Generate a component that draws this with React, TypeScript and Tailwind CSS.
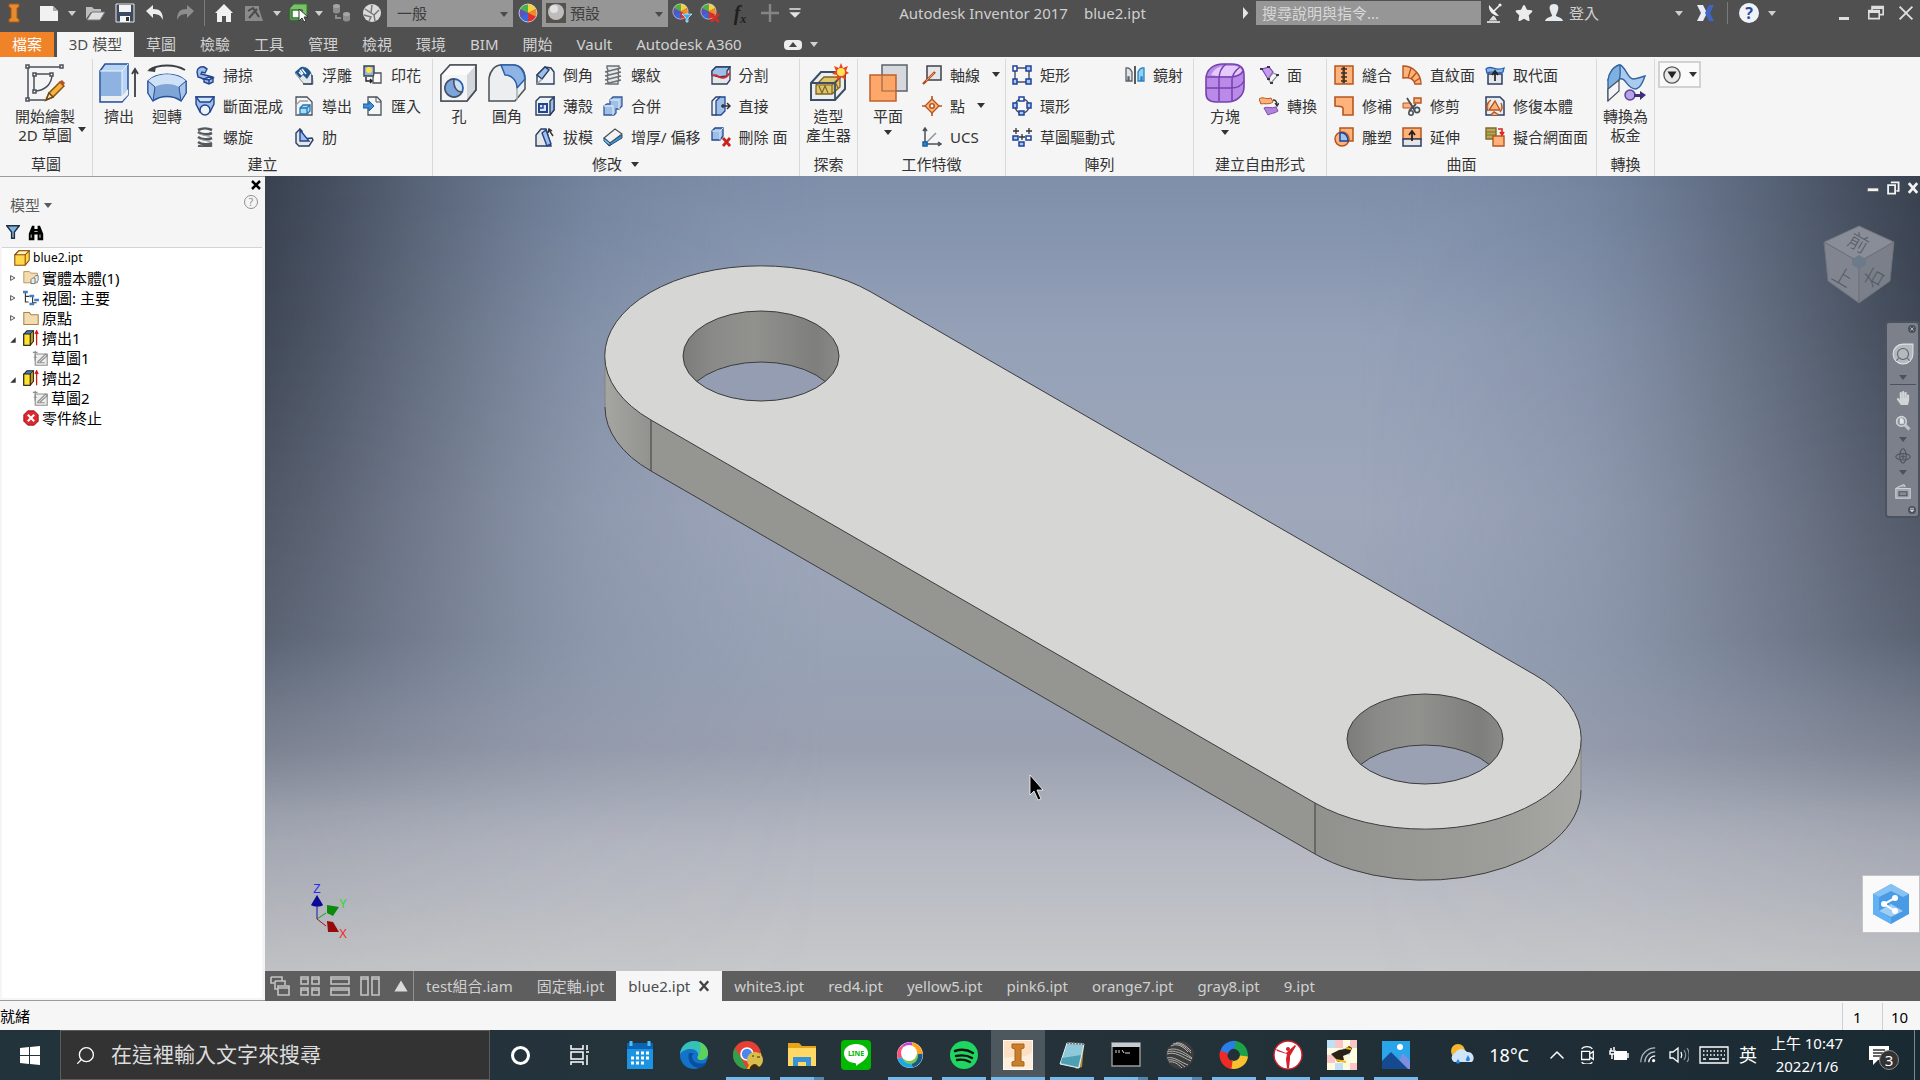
import type { ReactNode } from "react";
import { ChevronUp, Search } from "lucide-react";
import { FaHandPaper, FaStar } from "react-icons/fa";

const NAVY = "#2a3f63";
const BLUE = "#9dbfe8";
const PALE = "#d5e4f5";
const GREY = "#e4e6e8";
const ORANGE = "#ffb27a";
const RUST = "#b4561f";

const smallIcons: Record<string, ReactNode> = {
  sweep: (
    <g fill={PALE} stroke="#23458f" strokeWidth="1.4">
      <path d="M2 7c0-4 4-6 7-5l3 2-2 4-3-1-1 2 8 2 4 1v5l-4 2-5-2v-3l-6-2z" fill={BLUE} />
      <path d="M9 14l5-2 4 1-4 2z" />
      <path d="M14 15v4M9 2l3 2" />
    </g>
  ),
  loft: (
    <g stroke="#23458f" strokeWidth="1.4">
      <path d="M1 1h18v7l-4 8H5L1 8z" fill={BLUE} />
      <path d="M1 1h18l-4 5H5z" fill={PALE} />
      <circle cx="10" cy="14" r="5" fill="#eef3fa" />
    </g>
  ),
  coil: (
    <g fill="none" stroke="#55585c" strokeWidth="2.6">
      <path d="M3 3c4-2 10-2 14 0M3 5c4 3 10 3 14 1M3 10c4 3 10 3 14 1M3 15c4 3 10 3 14 1M3 19c4 1 10 1 14-1" />
      <path d="M4 7l12 3M4 12l12 3" stroke="#a4a7aa" strokeWidth="1" />
    </g>
  ),
  emboss: (
    <g>
      <path d="M1 8L8 2c6 0 11 5 11 17h-9z" fill={GREY} stroke="#8b9096" />
      <path d="M1 7l6-5c5 0 8 2 10 6l-4 6-4-4-3 3z" fill="#1f5690" />
      <path d="M6 5l3 4M8 4l4 5M5 7l3 3" stroke="#fff" strokeWidth="1.4" />
      <path d="M18 10v9H9" fill="none" stroke={NAVY} strokeWidth="1.4" />
    </g>
  ),
  derive: (
    <g stroke="#4b5058" strokeWidth="1.3">
      <path d="M2 1h11l5 5v13H2z" fill="#f4f5f6" />
      <path d="M2 19V9l4-4h8" fill="none" stroke="#9aa0a6" />
      <path d="M6 12l3-3h7v6l-3 3H6z" fill="#a9dbf7" stroke="#2477b5" />
      <path d="M6 12h7v6M13 12l3-3" fill="none" stroke="#2477b5" />
    </g>
  ),
  rib: (
    <g stroke={NAVY} strokeWidth="1.4">
      <path d="M2 6l4-4 2 2v8l10-1 1 2-4 6H5l-3-3z" fill={GREY} />
      <path d="M6 3v11h9z" fill={BLUE} stroke="#23458f" />
    </g>
  ),
  decal: (
    <g>
      <path d="M1 1h10v10H1z" fill="#8fb4e6" stroke="#3c4046" strokeWidth="1.4" />
      <circle cx="6" cy="5" r="3" fill="#ffe14b" />
      <path d="M11 8h7v10h-8v-5z" fill="#fafafa" stroke="#4b5058" strokeWidth="1.3" />
      <path d="M3 12v4h6M7 14l2 2-2 2" fill="none" stroke="#222" strokeWidth="1.4" />
    </g>
  ),
  importIn: (
    <g>
      <path d="M5 1h9l4 4v14H5z" fill="#f4f5f6" stroke="#4b5058" strokeWidth="1.3" />
      <path d="M13 1v5h5" fill="none" stroke="#4b5058" />
      <path d="M0 8h6V5l5 5-5 5v-3H0z" fill="#3f8fd8" stroke="#1d5c9e" />
    </g>
  ),
  chamfer: (
    <g stroke={NAVY} strokeWidth="1.4">
      <path d="M2 10l8-8 6 1 3 4v12H2z" fill="#f0f1f2" />
      <path d="M2 10l8-8 4 3-7 9z" fill={BLUE} />
      <path d="M7 14l-5 5" stroke="#9aa0a6" />
    </g>
  ),
  shell: (
    <g stroke={NAVY} strokeWidth="1.4">
      <path d="M1 5l4-4h14v13l-4 5H1z" fill="#f0f1f2" />
      <path d="M15 5l4-4v13l-4 5z" fill={BLUE} />
      <path d="M4 8h8v8H4z" fill={PALE} stroke="#23458f" strokeWidth="2" />
      <path d="M8 8v4H4" fill="none" stroke="#23458f" />
    </g>
  ),
  draft: (
    <g stroke={NAVY} strokeWidth="1.4">
      <path d="M1 19V8l5-6h5l5 17z" fill={GREY} />
      <path d="M7 6l4-3 5 14-4 2z" fill={BLUE} stroke="#23458f" />
      <path d="M18 9l-4-6M13 6l1-4 3 2" fill="none" stroke="#333" />
    </g>
  ),
  thread: (
    <g stroke="#6a6e73" strokeWidth="1.4" fill="#e6e7e8">
      <path d="M4 1h12v2l-1 2 1 2-1 2 1 2-1 2 1 2-1 2v2H5v-2l-1-2 1-2-1-2 1-2-1-2 1-2-1-2z" />
      <path d="M2 7l16-4M2 11l16-4M2 15l16-4M2 19l16-4" />
    </g>
  ),
  combine: (
    <g stroke="#345a94" strokeWidth="1.3">
      <path d="M7 4l3-3h9v9l-3 3h-3v4l-2 2H1v-9l3-2h3z" fill={BLUE} />
      <path d="M7 4h9v9M1 10h9v9" fill="none" stroke={PALE} />
    </g>
  ),
  thicken: (
    <g>
      <path d="M1 13l5 6 13-8v-3L6 16z" fill="#3b9ad8" stroke="#1f4f7e" />
      <path d="M1 11L12 2l7 5L7 16z" fill="#f2f3f4" stroke="#4b5058" strokeWidth="1.2" />
      <path d="M1 11v3l6 5v-3z" fill="#7cc4ee" stroke="#1f4f7e" />
    </g>
  ),
  split: (
    <g stroke={NAVY} strokeWidth="1.3">
      <path d="M1 6l4-4h14v13l-3 4H1z" fill={GREY} />
      <path d="M1 6l4-4h14l-3 4v5l-8 1-7-2z" fill={BLUE} />
      <path d="M1 11c5-4 8 5 14 1l4-4" fill="none" stroke="#d8262c" strokeWidth="1.8" />
    </g>
  ),
  direct: (
    <g stroke={NAVY} strokeWidth="1.3">
      <path d="M1 5l4-4h4v14l-4 4H1z" fill="#f0f1f2" />
      <path d="M5 5l4-4h5v14l-4 4H5z" fill={BLUE} stroke="#23458f" />
      <path d="M12 8v4M10 10h8M16 7l3 3-3 3" fill="none" stroke="#333" strokeWidth="1.5" />
    </g>
  ),
  deleteFace: (
    <g>
      <path d="M1 4l3-3h8v8l-3 4H1z" fill={BLUE} stroke="#23458f" strokeWidth="1.3" />
      <path d="M1 4h8v9M9 4l3-3" fill="none" stroke={PALE} />
      <path d="M12 11l7 8M19 11l-7 8" stroke="#c8231e" strokeWidth="2.8" />
    </g>
  ),
  axis: (
    <g>
      <path d="M5 1h14v14H5z" fill={GREY} stroke="#3c424a" strokeWidth="1.5" />
      <path d="M1 19L13 7" stroke="#b0471e" strokeWidth="2.4" />
      <path d="M4 16l8-8" stroke="#ff9a5a" strokeWidth="1" />
    </g>
  ),
  point: (
    <g>
      <path d="M10 0v20M0 10h20" stroke={RUST} strokeWidth="1.6" />
      <path d="M10 3l7 7-7 7-7-7z" fill={ORANGE} stroke={RUST} strokeWidth="1.3" />
      <circle cx="10" cy="10" r="2.2" fill="#fff" stroke={RUST} strokeWidth="1.6" />
    </g>
  ),
  ucs: (
    <g stroke="#4b5058" strokeWidth="1.5" fill="none">
      <path d="M3 17V2M1 4l2-3 2 3M4 17h14M16 15l3 2-3 2" />
      <path d="M4 16L14 6" stroke="#8a9097" />
      <path d="M1 15h4v4H1z" fill="#2b8de0" stroke="#1b5ca0" />
    </g>
  ),
  rectArray: (
    <g>
      <path d="M3 3h14v14H3z" fill="none" stroke="#4b5058" strokeWidth="1.4" />
      <g fill="#a9c7ef" stroke="#1e419c" strokeWidth="1.5">
        <path d="M1 1h4v5H1z" fill="#fff" />
        <path d="M14 1h5v5h-5zM1 14h4v5H1zM14 14h5v5h-5z" />
      </g>
    </g>
  ),
  circArray: (
    <g>
      <circle cx="10" cy="10" r="7" fill="none" stroke="#4b5058" strokeWidth="1.4" />
      <g fill="#a9c7ef" stroke="#1e419c" strokeWidth="1.5">
        <path d="M7 1h5v4H7z" fill="#fff" />
        <path d="M1 7h4v5H1zM15 7h4v5h-4zM7 15h5v4H7z" />
      </g>
    </g>
  ),
  sketchArray: (
    <g>
      <path d="M4 1v6M1 4h6M17 1v6M14 4h6M10 7v6M7 10h6" stroke="#333" strokeWidth="1.3" />
      <g fill="#a9c7ef" stroke="#1e419c" strokeWidth="1.5">
        <path d="M1 9h5v4H1zM7 15h5v4H7z" />
        <path d="M14 9h5v4h-5z" fill="#fff" />
      </g>
    </g>
  ),
  mirror: (
    <g>
      <path d="M10 1v18" stroke="#333" strokeWidth="1.6" />
      <path d="M1 3c4-1 5 2 6 4v9H4v-4H3v4H1z" fill="#dfe3e7" stroke="#5b626b" strokeWidth="1.3" />
      <path d="M19 3c-4-1-5 2-6 4v9h3v-4h1v4h2z" fill="#8fd0f5" stroke="#2a82bf" strokeWidth="1.3" />
    </g>
  ),
  freeFace: (
    <g>
      <path d="M3 4l7-2 4 5-5 7z" fill="#c79cf0" stroke="#7a4bb0" strokeWidth="1.2" />
      <path d="M9 14l5-6 5 2-7 8z" fill="none" stroke="#8a9097" strokeWidth="1.2" />
      <path d="M1 3h3v2H1zM17 9h3v2h-3zM11 17h3v2h-3zM8 1h3v2H8zM8 13h3v2H8z" fill="#3c3448" />
    </g>
  ),
  freeConvert: (
    <g>
      <path d="M0 3c4-3 6 1 12-1l2 4c-4 3-9 1-12 2z" fill={ORANGE} stroke={RUST} />
      <path d="M5 12c4-2 7 1 12-1l2 4c-4 3-7 2-10 4z" fill="#b183dc" stroke="#7a4bb0" />
      <path d="M14 4c3 0 4 2 4 5M16 7l2 3 2-3" fill="none" stroke="#333" strokeWidth="1.3" />
    </g>
  ),
  stitch: (
    <g>
      <path d="M1 1h8v18H1zM10 1h9v18h-9z" fill={ORANGE} stroke={RUST} strokeWidth="1.5" />
      <path d="M7 4h6M7 8h6M7 12h6M7 16h6M10 2v16" stroke="#333" strokeWidth="1.5" />
    </g>
  ),
  patch: <path d="M1 1h18v18H9v-7c-1-2-4-2-8-2z" fill={ORANGE} stroke={RUST} strokeWidth="1.6" />,
  sculpt: (
    <g>
      <path d="M6 1h13v13H6z" fill={ORANGE} stroke={RUST} strokeWidth="1.5" />
      <circle cx="8" cy="12" r="7" fill={ORANGE} stroke={RUST} strokeWidth="1.5" />
      <path d="M6 6c5-1 8 3 8 8H6z" fill="#9fc4ee" stroke="#1e419c" strokeWidth="1.5" />
    </g>
  ),
  ruled: (
    <g fill={ORANGE} stroke={RUST} strokeWidth="1.4">
      <path d="M1 1c10 0 18 8 18 18h-6C12 14 7 12 1 13z" />
      <path d="M6 13L9 3M9 14l6-7M12 17l6-4" />
    </g>
  ),
  trim: (
    <g>
      <path d="M1 7h8l2 5H1z" fill={ORANGE} stroke={RUST} />
      <path d="M12 2h7v5h-7z" fill={ORANGE} stroke={RUST} strokeWidth="1.4" />
      <path d="M5 2l8 13M14 8L7 15" stroke="#4b5058" strokeWidth="1.8" />
      <g fill="none" stroke="#4b5058" strokeWidth="1.6">
        <circle cx="15" cy="14" r="2.6" />
        <circle cx="9" cy="17" r="2.2" />
      </g>
    </g>
  ),
  extend: (
    <g>
      <path d="M1 1h18v11H1z" fill={ORANGE} stroke={RUST} strokeWidth="1.5" />
      <path d="M1 12h18v7H1z" fill={GREY} stroke={NAVY} strokeWidth="1.5" />
      <path d="M10 14V5M7 8l3-4 3 4" fill="none" stroke="#222" strokeWidth="1.8" />
    </g>
  ),
  replaceFace: (
    <g>
      <path d="M3 9h14v10H3z" fill={GREY} stroke={NAVY} strokeWidth="1.5" />
      <path d="M1 4c5-5 9 3 18-1l-1 4c-6 3-10-2-16 1z" fill="#8db8ec" stroke="#2762b5" strokeWidth="1.3" />
      <path d="M10 16V8M7 10l3-4 3 4" fill="none" stroke="#222" strokeWidth="1.7" />
    </g>
  ),
  repair: (
    <g>
      <path d="M1 1h14l4 4v14H1z" fill="#e8edf3" stroke={NAVY} strokeWidth="1.5" />
      <path d="M4 14L10 5l5 9z" fill={ORANGE} stroke={RUST} strokeWidth="1.4" />
      <path d="M3 15a8 8 0 0 1 3-11M16 7a8 8 0 0 1-1 9M6 19l3-3 5 3" fill={ORANGE} stroke={RUST} strokeWidth="1.4" />
    </g>
  ),
  fitMesh: (
    <g>
      <path d="M1 1h10v11H1z" fill="#b9a85a" stroke="#7b6d28" strokeWidth="1.4" />
      <path d="M1 5h10M1 8h10" stroke="#7b6d28" />
      <path d="M8 9h11v10H8z" fill={ORANGE} stroke={RUST} strokeWidth="1.4" />
      <path d="M13 2h4v4M15 5l2 3 2-3" fill="none" stroke="#e02020" strokeWidth="1.6" />
    </g>
  ),
};

const largeIcons: Record<string, ReactNode> = {
  sketch: (
    <g fill="none" stroke="#4b5058" strokeWidth="1.5">
      <path d="M3 4h34M3 4v33M3 37h17M9 11h19M9 11v17M9 28c10 0 18-6 18-17" />
      <g fill="#fff">
        <path d="M1 2h3v3H1zM35 2h3v3h-3zM1 35h3v3H1zM8 10h3v3H8zM25 10h3v3h-3zM8 27h3v3H8z" />
      </g>
      <path d="M21 37l3-7 11-11 4 4-11 11z" fill="#f6b43c" stroke="#8a5410" />
      <path d="M34 19l4 4 2-3-3-3z" fill="#b4532a" stroke="none" />
      <path d="M21 37l3-7 4 4z" fill="#f4e3c6" stroke="#6d4413" />
    </g>
  ),
  extrude: (
    <g>
      <path d="M1 8l5-7h23v31l-6 7H1z" fill="#b9d3f2" stroke="#24509c" strokeWidth="1.5" />
      <path d="M2 8h21v25H2z" fill="#8fb3e0" />
      <path d="M2 33h21v5H2zM23 33l6-7v6l-6 6z" fill="#eceef0" />
      <path d="M1 8h22v30M23 8l6-7" fill="none" stroke="#eef5fd" />
      <path d="M36 34V8M33 11l3-5 3 5" fill="none" stroke="#3b3f45" strokeWidth="1.8" />
    </g>
  ),
  revolve: (
    <g>
      <path d="M2 7c10-6 26-6 36 0" fill="none" stroke="#3b3f45" strokeWidth="2" />
      <path d="M0 8l9-5-1 6z" fill="#3b3f45" />
      <path d="M1 18c9-9 29-9 38 0v12l-5 8c-8-6-20-6-28 0l-5-8z" fill="#7fa5d6" stroke="#24509c" strokeWidth="1.5" />
      <path d="M1 18c9-9 29-9 38 0l-7 6c-6-4-18-4-24 0z" fill="#cfe1f6" />
      <path d="M1 18l7 6-2 14-5-8zM39 18l-7 6 2 14 5-8z" fill="#a9c6ea" stroke="#24509c" />
    </g>
  ),
  hole: (
    <g stroke="#4b5058" strokeWidth="1.5">
      <path d="M2 12l9-10h26v25L28 38H2z" fill="#d3d7db" />
      <path d="M2 12h26v26H2z" fill="#f3f4f5" stroke="none" />
      <path d="M2 12l9-10h26l-9 10z" fill="#fbfbfb" stroke="none" />
      <path d="M2 12l9-10h26v25L28 38H2z" fill="none" />
      <circle cx="15" cy="25" r="9" fill="#cfe0f5" stroke="#2b5fae" strokeWidth="1.8" />
      <path d="M15 16a9 9 0 1 0 8 13c-6 0-9-6-8-13z" fill="#7ba6dd" />
    </g>
  ),
  fillet: (
    <g stroke="#4b5058" strokeWidth="1.5">
      <path d="M2 15C3 8 8 2 14 2h12c8 0 12 6 12 14v10L28 38H2z" fill="#eceef0" />
      <path d="M14 2h12c8 0 12 8 12 14l-8 9c0-8-6-13-12-13z" fill="#8db4e4" stroke="#2b5fae" />
      <path d="M30 25v12" stroke="#aab0b6" />
    </g>
  ),
  generator: (
    <g>
      <path d="M2 20l10-11h24v17L26 37H2z" fill="#eceef0" stroke="#3c4f66" strokeWidth="2" />
      <path d="M7 22l8-8h16v10l-8 7H7z" fill="#e2c56a" stroke="#7b6424" strokeWidth="1.3" />
      <path d="M7 22h16v9M23 22l8-8M10 23l3 7 3-7 3 7M26 19l3 6" fill="none" stroke="#7b6424" strokeWidth="1.2" />
      <path d="M2 20h24v17M26 20l10-11" fill="none" stroke="#3c4f66" strokeWidth="1.8" />
      <path d="M32 0l2 5 5-2-2 5 3 2-4 2 1 5-5-3-4 4 0-6-5-1 4-3-2-5 5 2z" fill="#f0441c" />
      <circle cx="32" cy="9" r="4" fill="#ffe45a" />
    </g>
  ),
  plane: (
    <g>
      <path d="M14 2h25v26H14z" fill="#d5d9de" stroke="#5b626b" strokeWidth="1.5" />
      <path d="M2 12h26v26H2z" fill="#ff9e5c" fillOpacity="0.9" stroke="#c0602a" strokeWidth="1.5" />
      <path d="M14 12v16h14" fill="none" stroke="#a86a45" strokeWidth="1.2" />
    </g>
  ),
  freeBox: (
    <g>
      <path d="M1 16C1 6 9 1 18 1h9c8 0 12 4 12 11v12c0 9-8 15-17 15H11C4 39 1 36 1 30z" fill="#b98ae8" stroke="#7541ae" strokeWidth="1.6" />
      <path d="M6 12c3-6 8-9 14-9h8c5 0 8 2 9 5-3 4-8 5-14 5H12z" fill="#e4cbfb" />
      <path d="M1 25h25c6 0 11-3 13-7M14 38V16c0-6 3-12 7-15M27 38V17c0-5 4-10 8-13M2 14h24c6 0 11-3 12-6" fill="none" stroke="#7541ae" strokeWidth="1.5" />
    </g>
  ),
  sheetMetal: (
    <g>
      <path d="M2 17C3 9 8 3 14 2c6 2 7 13 13 14 4 0 8-2 12-3-2 6-5 12-9 13-10 0-9-12-17-10z" fill="#a9cbee" stroke="#33669f" strokeWidth="1.4" />
      <path d="M2 17C3 9 8 3 14 2c0 5 1 10-1 15L2 38z" fill="#7fb0e2" stroke="#33669f" strokeWidth="1.4" />
      <path d="M2 26l11-9v11L2 38z" fill="#f3f5f7" stroke="#4b5058" strokeWidth="1.2" />
      <circle cx="24" cy="32" r="5" fill="#b7a2e6" stroke="#5c449c" strokeWidth="1.5" />
      <path d="M28 31h6v-3l6 4-6 5v-3h-6z" fill="#3f2e78" />
    </g>
  ),
};

function Caret({ className = "" }: { className?: string }) {
  return (
    <svg viewBox="0 0 8 5" className={`h-[5px] w-2 shrink-0 ${className}`} fill="currentColor" aria-hidden="true">
      <path d="M0 0h8L4 5z" />
    </svg>
  );
}

function Big({ icon, lines, caret, side }: { icon: string; lines: string[]; caret?: boolean; side?: boolean }) {
  return (
    <button className={`relative flex shrink-0 flex-col items-center pt-1 ${side ? "w-[90px]" : "w-12"}`}>
      <svg viewBox="0 0 40 40" className="h-10 w-10 shrink-0" aria-hidden="true">
        {largeIcons[icon]}
      </svg>
      <span className="mt-1 whitespace-nowrap leading-[19px]">
        {lines.map((line) => (
          <span key={line} className="block">{line}</span>
        ))}
      </span>
      {caret && <Caret className="mt-1" />}
      {side && <Caret className="absolute right-1 bottom-5 w-1.5" />}
    </button>
  );
}

type Tool = { icon: string; label: string; caret?: boolean };

function ToolColumn({ tools }: { tools: Tool[] }) {
  return (
    <div className="flex shrink-0 flex-col">
      {tools.map((tool) => (
        <button key={tool.label} className="flex h-[31px] items-center gap-2 whitespace-nowrap">
          <svg viewBox="0 0 20 20" className="h-5 w-5 shrink-0" aria-hidden="true">
            {smallIcons[tool.icon]}
          </svg>
          <span>{tool.label}</span>
          {tool.caret && <Caret className="ml-1 w-1.5" />}
        </button>
      ))}
    </div>
  );
}

function Panel({ title, className, caret, children }: { title: string; className: string; caret?: boolean; children: ReactNode }) {
  return (
    <section className={`flex shrink-0 flex-col border-r border-[#d9d9d9] ${className}`} aria-label={title}>
      <div className="flex flex-1">{children}</div>
      <h2 className="flex h-6 items-center justify-center gap-2">
        {title}
        {caret && <Caret className="w-2.5" />}
      </h2>
    </section>
  );
}

function ToolButton({ label, className = "w-[30px]", children }: { label: string; className?: string; children: ReactNode }) {
  return (
    <button aria-label={label} className={`flex shrink-0 items-center justify-center ${className}`}>
      {children}
    </button>
  );
}

function Glyph({ children, className = "h-5 w-5" }: { children: ReactNode; className?: string }) {
  return (
    <svg viewBox="0 0 20 20" className={`shrink-0 ${className}`} aria-hidden="true">
      {children}
    </svg>
  );
}

function ColorWheel() {
  return (
    <g>
      <path d="M10 10V1a9 9 0 0 1 8 5z" fill="#f6d33c" />
      <path d="M10 10l8-4a9 9 0 0 1 0 8z" fill="#f08a2c" />
      <path d="M10 10l8 4a9 9 0 0 1-8 5z" fill="#df2f2f" />
      <path d="M10 10v9a9 9 0 0 1-8-5z" fill="#3d66dd" />
      <path d="M10 10l-8 4a9 9 0 0 1 0-8z" fill="#5f4fc4" />
      <path d="M10 10L2 6a9 9 0 0 1 8-5z" fill="#4fae4a" />
      <circle cx="10" cy="10" r="9" fill="none" stroke="#d9d9d9" strokeWidth="0.8" />
    </g>
  );
}

function TitleBar() {
  return (
    <header className="flex h-8 items-center bg-[#505050] pb-1.5 text-[#cfcfcf]">
      <ToolButton label="Inventor" className="mr-1.5 w-7">
        <Glyph className="h-6 w-5">
          <path d="M5 1h10v3l-2 1v10l2 1v3H5v-3l2-1V5L5 4z" fill="#e88b2e" stroke="#a85a14" />
        </Glyph>
      </ToolButton>
      <ToolButton label="新建">
        <Glyph><path d="M1 3h13l5 5v10H1z" fill="#f1f1f1" /><path d="M14 3v5h5z" fill="#a8a8a8" /></Glyph>
      </ToolButton>
      <ToolButton label="新建選項" className="w-4"><Caret className="w-1.5" /></ToolButton>
      <ToolButton label="開啟">
        <Glyph><path d="M1 16V4h6l2 2h7v3H6z" fill="#bdbdbd" /><path d="M2 17L7 9h13l-5 8z" fill="#dcdfe4" stroke="#777" /></Glyph>
      </ToolButton>
      <ToolButton label="儲存">
        <Glyph><path d="M1 1h18v18H1z" fill="#3e4a60" stroke="#e6e6e6" /><path d="M4 2h12v7H4z" fill="#f5f5f5" /><path d="M5 13h10v6H5z" fill="#f5f5f5" /><path d="M11 14h3v4h-3z" fill="#333" /></Glyph>
      </ToolButton>
      <ToolButton label="復原">
        <Glyph><path d="M1 8l7-6v4c7 0 10 3 10 11-2-4-4-6-10-6v4z" fill="#ececec" /></Glyph>
      </ToolButton>
      <ToolButton label="重做">
        <Glyph><path d="M19 8l-7-6v4C5 6 2 9 2 17c2-4 4-6 10-6v4z" fill="#8d8d8d" /></Glyph>
      </ToolButton>
      <span className="mx-1 h-[26px] w-px bg-[#7a7a7a]" />
      <ToolButton label="首頁">
        <Glyph><path d="M10 1L1 10h2v9h5v-6h4v6h5v-9h2z" fill="#f1f1f1" /></Glyph>
      </ToolButton>
      <ToolButton label="草圖工具">
        <Glyph><path d="M1 3h14v3l4 12H1z" fill="#8a8a8a" /><path d="M4 8l5-3 6 9M5 15l8-9" stroke="#4a4a4a" strokeWidth="2" fill="none" /></Glyph>
      </ToolButton>
      <ToolButton label="草圖選項" className="w-4"><Caret className="w-1.5" /></ToolButton>
      <ToolButton label="選取" className="w-7">
        <Glyph><path d="M1 5l4-4h13v11l-4 5H1z" fill="#7cc06a" stroke="#2f7a2a" /><path d="M3 7h10v8H3z" fill="#fff" stroke="#2f7a2a" strokeWidth="1.5" /><path d="M10 6v12l3-3 2 4 2-1-2-4h4z" fill="#fff" stroke="#333" /></Glyph>
      </ToolButton>
      <ToolButton label="選取選項" className="w-3"><Caret className="w-1.5" /></ToolButton>
      <ToolButton label="更新" className="w-8">
        <Glyph>
          <path d="M2 3v6c2 2 5 2 7 0V3zM12 11v6c2 2 5 2 7 0v-6z" fill="#8d8d8d" />
          <ellipse cx="5.5" cy="3" rx="3.5" ry="2" fill="#a5a5a5" /><ellipse cx="15.5" cy="11" rx="3.5" ry="2" fill="#a5a5a5" />
          <path d="M5 12v3h5" stroke="#8d8d8d" strokeWidth="2" fill="none" />
        </Glyph>
      </ToolButton>
      <ToolButton label="材料">
        <Glyph><circle cx="10" cy="10" r="9" fill="#dcdcdc" /><path d="M3 6l6 4 1-8M17 7l-5 5 1 6M2 12l7 2-2 4M9 10l3 2" fill="none" stroke="#777" strokeWidth="1.5" /></Glyph>
      </ToolButton>
      <div className="relative flex h-[27px] shrink-0 items-start">
        <select aria-label="材料樣式" className="h-[27px] w-[126px] appearance-none bg-[#969696] pl-2.5 text-[#3d3d3d]">
          <option>一般</option>
        </select>
        <Caret className="absolute top-3 right-1 w-2.5 text-[#4a4a4a]" />
      </div>
      <ToolButton label="外觀" className="w-[29px]"><Glyph><ColorWheel /></Glyph></ToolButton>
      <div className="relative flex h-[27px] shrink-0 items-start">
        <select aria-label="外觀樣式" className="h-[27px] w-[126px] appearance-none bg-[#969696] pl-7 text-[#3d3d3d]">
          <option>預設</option>
        </select>
        <Glyph className="absolute top-[3px] left-1 h-5 w-5">
          <path d="M0 0h20v20H0z" fill="#55524d" />
          <circle cx="10" cy="9" r="8" fill="#bdbdbd" /><circle cx="8" cy="6" r="4" fill="#e2e2e2" />
        </Glyph>
        <Caret className="absolute top-3 right-1 w-2.5 text-[#4a4a4a]" />
      </div>
      <ToolButton label="調整外觀" className="w-[27px]">
        <Glyph><g transform="scale(0.85)"><ColorWheel /></g><path d="M10 11h10l-4 4v4h-2v-4z" fill="#3bb0ea" stroke="#fff" strokeWidth="0.6" /></Glyph>
      </ToolButton>
      <ToolButton label="清除外觀">
        <Glyph><g transform="scale(0.85)"><ColorWheel /></g><path d="M11 11l8 8M19 11l-8 8" stroke="#d02f24" strokeWidth="2.6" /></Glyph>
      </ToolButton>
      <ToolButton label="參數"><span className="font-['Liberation_Serif',serif] text-xl leading-5 font-bold text-[#1f1f1f] italic">f<sub className="text-xs">x</sub></span></ToolButton>
      <ToolButton label="加入"><Glyph><path d="M10 1v18M1 10h18" stroke="#868686" strokeWidth="2.4" /></Glyph></ToolButton>
      <ToolButton label="自訂" className="w-5">
        <Glyph className="h-4 w-4"><path d="M3 4h14v2H3zM3 9h14l-7 7z" fill="#e4e4e4" /></Glyph>
      </ToolButton>

      <h1 className="flex min-w-0 flex-1 justify-center gap-4 whitespace-nowrap">
        <span>Autodesk Inventor 2017</span>
        <span>blue2.ipt</span>
      </h1>

      <Glyph className="mr-1 h-3 w-3"><path d="M5 0l9 10-9 10z" fill="#e4e4e4" /></Glyph>
      <input aria-label="搜尋說明" placeholder="搜尋說明與指令..." className="h-6 w-[225px] shrink-0 bg-[#969696] px-1.5 placeholder:text-[#d8d8d8]" />
      <ToolButton label="通訊中心" className="w-7">
        <Glyph>
          <path d="M4 2c-1 6 4 11 10 11z" fill="#f1f1f1" />
          <path d="M9 8l5-5" stroke="#f1f1f1" strokeWidth="1.6" />
          <circle cx="15" cy="2" r="1.6" fill="#f1f1f1" />
          <path d="M8 12l2 1 3 5H3z" fill="#dcdcdc" stroke="#2c2c2c" strokeWidth="0.8" />
          <path d="M2 19h13" stroke="#f1f1f1" strokeWidth="1.6" />
        </Glyph>
      </ToolButton>
      <ToolButton label="我的最愛"><FaStar className="h-[18px] w-[18px] text-[#ececec]" /></ToolButton>
      <ToolButton label="帳戶">
        <Glyph><path d="M10 1c-4 0-5 3-4 6 1 4 2 4 2 6-1 1-6 1-7 5h18c-1-4-6-4-7-5 0-2 1-2 2-6 1-3 0-6-4-6z" fill="#e6ebf0" /></Glyph>
      </ToolButton>
      <button className="flex w-[122px] shrink-0 items-center justify-between pr-2">登入<Caret className="w-1.5" /></button>
      <ToolButton label="Exchange">
        <Glyph><path d="M1 2h6l4 8-4 8H1l4-8z" fill="#e8edf5" /><path d="M18 2h-5l-4 8 4 8h5l-4-8z" fill="#3f66c4" /></Glyph>
      </ToolButton>
      <span className="mx-1.5 h-[22px] w-px bg-[#7a7a7a]" />
      <ToolButton label="說明">
        <span className="flex h-5 w-5 items-center justify-center rounded-full bg-[#f0f3f8] text-base leading-none font-bold text-[#2c4da0]">?</span>
      </ToolButton>
      <ToolButton label="說明選項" className="mr-12 w-4"><Caret className="w-1.5" /></ToolButton>
      <ToolButton label="最小化" className="w-8"><span className="mt-2.5 h-[3px] w-2.5 bg-[#dedede]" /></ToolButton>
      <ToolButton label="還原" className="w-8">
        <Glyph className="h-4 w-4"><path d="M5 6V2h14v10h-5M1 7h13v10H1zM1 9h13M5 4h14" fill="none" stroke="#dedede" strokeWidth="2" /></Glyph>
      </ToolButton>
      <ToolButton label="關閉" className="w-7">
        <Glyph className="h-4 w-4"><path d="M2 2l16 16M18 2L2 18" stroke="#dedede" strokeWidth="2.4" /></Glyph>
      </ToolButton>
    </header>
  );
}

const ribbonTabs = ["草圖", "檢驗", "工具", "管理", "檢視", "環境", "BIM", "開始", "Vault", "Autodesk A360"];

function RibbonTabs() {
  return (
    <nav className="flex h-[25px] items-stretch bg-[#505050] text-[#d2d2d2]">
      <button className="w-[54px] bg-[#f08228] pb-0.5 text-white">檔案</button>
      <button className="ml-[3px] w-[77px] bg-[#f5f5f5] pb-0.5 text-[#4c4c4c]">3D 模型</button>
      {ribbonTabs.map((tab) => (
        <button key={tab} className="px-3 pb-0.5 whitespace-nowrap">{tab}</button>
      ))}
      <button aria-label="最小化功能區" className="ml-[30px] flex items-center gap-2">
        <span className="flex h-2.5 w-[18px] items-center justify-center rounded-sm bg-[#ececec] text-[#444]"><Caret className="rotate-180" /></span>
        <Caret className="w-1.5" />
      </button>
    </nav>
  );
}

function Ribbon() {
  return (
    <div className="flex h-[119px] overflow-hidden bg-[#f5f5f5] pt-0.5 text-[#333]">
      <Panel title="草圖" className="w-[93px]">
        <Big icon="sketch" lines={["開始繪製", "2D 草圖"]} side />
      </Panel>
      <Panel title="建立" className="w-[340px]">
        <div className="flex pl-0.5">
          <Big icon="extrude" lines={["擠出"]} />
          <Big icon="revolve" lines={["迴轉"]} />
        </div>
        <div className="flex gap-[11px] pl-1">
          <ToolColumn tools={[{ icon: "sweep", label: "掃掠" }, { icon: "loft", label: "斷面混成" }, { icon: "coil", label: "螺旋" }]} />
          <ToolColumn tools={[{ icon: "emboss", label: "浮雕" }, { icon: "derive", label: "導出" }, { icon: "rib", label: "肋" }]} />
          <ToolColumn tools={[{ icon: "decal", label: "印花" }, { icon: "importIn", label: "匯入" }]} />
        </div>
      </Panel>
      <Panel title="修改" className="w-[367px]" caret>
        <div className="flex pl-0.5">
          <Big icon="hole" lines={["孔"]} />
          <Big icon="fillet" lines={["圓角"]} />
        </div>
        <div className="flex gap-2.5 pl-1">
          <ToolColumn tools={[{ icon: "chamfer", label: "倒角" }, { icon: "shell", label: "薄殼" }, { icon: "draft", label: "拔模" }]} />
          <ToolColumn tools={[{ icon: "thread", label: "螺紋" }, { icon: "combine", label: "合併" }, { icon: "thicken", label: "增厚/ 偏移" }]} />
          <ToolColumn tools={[{ icon: "split", label: "分割" }, { icon: "direct", label: "直接" }, { icon: "deleteFace", label: "刪除 面" }]} />
        </div>
      </Panel>
      <Panel title="探索" className="w-[58px] items-center">
        <Big icon="generator" lines={["造型", "產生器"]} />
      </Panel>
      <Panel title="工作特徵" className="w-[148px]">
        <div className="flex gap-2.5 pl-1.5">
          <Big icon="plane" lines={["平面"]} caret />
          <ToolColumn tools={[{ icon: "axis", label: "軸線", caret: true }, { icon: "point", label: "點", caret: true }, { icon: "ucs", label: "UCS" }]} />
        </div>
      </Panel>
      <Panel title="陣列" className="w-[188px]">
        <div className="flex gap-2.5 pl-1.5">
          <ToolColumn tools={[{ icon: "rectArray", label: "矩形" }, { icon: "circArray", label: "環形" }, { icon: "sketchArray", label: "草圖驅動式" }]} />
          <ToolColumn tools={[{ icon: "mirror", label: "鏡射" }]} />
        </div>
      </Panel>
      <Panel title="建立自由形式" className="w-[133px]">
        <div className="flex gap-2.5 pl-[7px]">
          <Big icon="freeBox" lines={["方塊"]} caret />
          <ToolColumn tools={[{ icon: "freeFace", label: "面" }, { icon: "freeConvert", label: "轉換" }]} />
        </div>
      </Panel>
      <Panel title="曲面" className="w-[270px]">
        <div className="flex gap-2.5 pl-[7px]">
          <ToolColumn tools={[{ icon: "stitch", label: "縫合" }, { icon: "patch", label: "修補" }, { icon: "sculpt", label: "雕塑" }]} />
          <ToolColumn tools={[{ icon: "ruled", label: "直紋面" }, { icon: "trim", label: "修剪" }, { icon: "extend", label: "延伸" }]} />
          <ToolColumn tools={[{ icon: "replaceFace", label: "取代面" }, { icon: "repair", label: "修復本體" }, { icon: "fitMesh", label: "擬合網面面" }]} />
        </div>
      </Panel>
      <Panel title="轉換" className="w-[58px] items-center">
        <Big icon="sheetMetal" lines={["轉換為", "板金"]} />
      </Panel>
      <button aria-label="面板選項" className="mt-0.5 ml-[3px] flex h-[27px] w-[43px] items-center justify-center gap-2 border-2 border-[#d2d2d2] bg-[#fafafa]">
        <Glyph className="h-[18px] w-[18px]">
          <circle cx="10" cy="10" r="9" fill="#e8e8e8" stroke="#555" strokeWidth="1.5" />
          <path d="M5 6h10l-5 8z" fill="#222" />
        </Glyph>
        <Caret className="w-1.5" />
      </button>
    </div>
  );
}

const treeIcons: Record<string, ReactNode> = {
  part: (
    <g stroke="#8a4a08" strokeWidth="1.3"><path d="M1 6l5-5h13v12l-5 6H1z" fill="#ffd94a" /><path d="M1 6l5-5h13l-5 5z" fill="#fff3b8" /><path d="M14 6v13" /></g>
  ),
  bodies: (
    <g><path d="M1 16V2h7l2 2h8v12z" fill="#f5dcae" stroke="#a5834c" /><path d="M10 12l2-2h3v7h-5zM14 9l2-2h3v6l-2 2" fill="#e8eef5" stroke="#566" /></g>
  ),
  views: (
    <g><path d="M3 3v12h4M3 8h5M12 8v8h5" fill="none" stroke="#333" strokeWidth="1.4" /><path d="M0 1h6v3H0zM8 6h6v3H8zM14 11h6v3h-6zM8 16h6v3H8z" fill="#3f7fc9" /></g>
  ),
  folder: <path d="M1 18V3h7l2 3h9v12z" fill="#f5dcae" stroke="#a5834c" strokeWidth="1.3" />,
  extrusion: (
    <g><path d="M1 5l4-4h8v13l-4 5H1z" fill="#3f7fc9" stroke="#222" strokeWidth="1.3" /><path d="M9 5l4-4v13l-4 5z" fill="#c9a400" stroke="#222" /><path d="M1 5h8v14H1z" fill="#ffe12e" stroke="#222" strokeWidth="1.3" /><path d="M17 19V3M15 5l2-4 2 4" fill="none" stroke="#d01818" strokeWidth="1.6" /></g>
  ),
  sketch: (
    <g fill="none" stroke="#8f8f8f" strokeWidth="1.4"><path d="M4 5h15v14H4z" fill="#eee" /><path d="M4 1v12M1 3h6M2 9h4M6 16h10M7 15L17 5l2 2-9 8" /></g>
  ),
  end: (
    <g><path d="M6 1h8l5 5v8l-5 5H6l-5-5V6z" fill="#e0262e" stroke="#7d0c12" /><path d="M6 6l8 8M14 6l-8 8" stroke="#fff" strokeWidth="2.6" /></g>
  ),
};

const treeRows = [
  { icon: "bodies", label: "實體本體(1)", fold: "closed" },
  { icon: "views", label: "視圖: 主要", fold: "closed" },
  { icon: "folder", label: "原點", fold: "closed" },
  { icon: "extrusion", label: "擠出1", fold: "open" },
  { icon: "sketch", label: "草圖1", nested: true },
  { icon: "extrusion", label: "擠出2", fold: "open" },
  { icon: "sketch", label: "草圖2", nested: true },
  { icon: "end", label: "零件終止" },
];

function ModelBrowser() {
  return (
    <aside className="flex w-[265px] shrink-0 flex-col border-t border-b border-[#9c9c9c] bg-[#f5f5f5] pb-0.5">
      <div className="flex h-4 items-center justify-end pr-1">
        <button aria-label="關閉瀏覽器"><Glyph className="h-2.5 w-2.5"><path d="M2 2l16 16M18 2L2 18" stroke="#000" strokeWidth="5" /></Glyph></button>
      </div>
      <div className="flex h-7 items-start justify-between pr-[7px] pl-2.5 text-[#5a5a5a]">
        <button className="flex items-center gap-1 pt-0.5">模型<Caret /></button>
        <button aria-label="說明" className="mt-0.5 flex h-3.5 w-3.5 items-center justify-center rounded-full border border-[#8f8f8f] text-[11px] text-[#8f8f8f]">?</button>
      </div>
      <div className="flex h-[26px] items-start gap-2 pt-1 pl-1.5">
        <button aria-label="篩選"><Glyph className="h-3.5 w-3.5"><path d="M1 1h18l-7 9v9H8v-9z" fill="#7fb2df" stroke="#1c2f45" strokeWidth="2" /></Glyph></button>
        <button aria-label="尋找">
          <Glyph className="h-4 w-4"><path d="M5 1h3v4h4V1h3l4 10v8h-7v-7H8v7H1v-8z" fill="#000" /><path d="M4 12v4M15 12v4M8 8h4" stroke="#fff" /></Glyph>
        </button>
      </div>
      <ul className="mr-[3px] ml-0.5 flex-1 border-t border-[#d4d4d4] bg-white text-black">
        <li className="flex h-5 items-center gap-[3px] pl-3 text-xs">
          <Glyph className="h-4 w-4">{treeIcons.part}</Glyph>
          blue2.ipt
        </li>
        {treeRows.map((row) => (
          <li key={row.label} className={`flex h-5 items-center gap-[3px] ${row.nested ? "pl-[30px]" : "pl-2"}`}>
            {!row.nested && (
              <span className="w-2.5 shrink-0">
                {row.fold === "closed" && <Glyph className="h-2.5 w-1.5"><path d="M2 2v16l14-8z" fill="#fff" stroke="#444" strokeWidth="3" /></Glyph>}
                {row.fold === "open" && <Glyph className="mt-1 h-1.5 w-1.5"><path d="M19 1v18H1z" fill="#333" /></Glyph>}
              </span>
            )}
            <Glyph className="h-4 w-4">{treeIcons[row.icon]}</Glyph>
            <span className="whitespace-nowrap">{row.label}</span>
          </li>
        ))}
      </ul>
    </aside>
  );
}

function Bore({ cx, cy, through }: { cx: number; cy: number; through: string }) {
  const id = `bore-${cx}`;
  return (
    <g>
      <clipPath id={id}><ellipse cx={cx} cy={cy} rx="78" ry="45" /></clipPath>
      <ellipse cx={cx} cy={cy} rx="78" ry="45" fill="url(#wall)" />
      <ellipse cx={cx} cy={cy + 51} rx="78" ry="45" fill={through} stroke="#3c3c3c" clipPath={`url(#${id})`} />
      <ellipse cx={cx} cy={cy} rx="78" ry="45" fill="none" stroke="#3c3c3c" />
    </g>
  );
}

function Scene() {
  return (
    <svg viewBox="0 0 1655 795" preserveAspectRatio="xMidYMid slice" className="absolute inset-0 h-full w-full" role="img" aria-label="blue2.ipt">
      <defs>
        <linearGradient id="sky" x1="0" y1="0" x2="0" y2="1">
          <stop offset="0" stopColor="#7e8faa" />
          <stop offset="0.1" stopColor="#8997b1" />
          <stop offset="0.2" stopColor="#94a1b7" />
          <stop offset="0.42" stopColor="#9fa7bb" />
          <stop offset="0.62" stopColor="#98a2b5" />
          <stop offset="0.72" stopColor="#9aa0b0" />
          <stop offset="0.84" stopColor="#b5b8c2" />
          <stop offset="1" stopColor="#c7c8ca" />
        </linearGradient>
        <linearGradient id="sides" x1="0" y1="0" x2="1" y2="0">
          <stop offset="0" stopColor="#353d4a" stopOpacity="0.95" />
          <stop offset="0.04" stopColor="#3a4250" stopOpacity="0.84" />
          <stop offset="0.12" stopColor="#465061" stopOpacity="0.55" />
          <stop offset="0.2" stopColor="#5b6a83" stopOpacity="0.3" />
          <stop offset="0.34" stopColor="#7888a5" stopOpacity="0" />
          <stop offset="0.66" stopColor="#7888a5" stopOpacity="0" />
          <stop offset="0.8" stopColor="#5b6a83" stopOpacity="0.3" />
          <stop offset="0.88" stopColor="#465061" stopOpacity="0.55" />
          <stop offset="0.96" stopColor="#3a4250" stopOpacity="0.84" />
          <stop offset="1" stopColor="#353d4a" stopOpacity="0.95" />
        </linearGradient>
        <linearGradient id="fade" x1="0" y1="0" x2="0" y2="1">
          <stop offset="0" stopColor="#fff" />
          <stop offset="0.2" stopColor="#ececec" />
          <stop offset="0.45" stopColor="#c0c0c0" />
          <stop offset="0.58" stopColor="#a8a8a8" />
          <stop offset="0.68" stopColor="#646464" />
          <stop offset="0.8" stopColor="#282828" />
          <stop offset="1" stopColor="#0c0c0c" />
        </linearGradient>
        <mask id="falloff"><rect width="1655" height="795" fill="url(#fade)" /></mask>
        <linearGradient id="wall">
          <stop offset="0" stopColor="#7c7c7a" />
          <stop offset="0.2" stopColor="#8a8a88" />
          <stop offset="0.45" stopColor="#91918e" />
          <stop offset="0.85" stopColor="#7e7e7c" />
          <stop offset="1" stopColor="#8a8a88" />
        </linearGradient>
        <linearGradient id="leftEnd">
          <stop offset="0" stopColor="#a5a5a2" />
          <stop offset="1" stopColor="#92928f" />
        </linearGradient>
        <linearGradient id="rightEnd">
          <stop offset="0" stopColor="#91918e" />
          <stop offset="0.7" stopColor="#9d9d99" />
          <stop offset="1" stopColor="#a8a8a4" />
        </linearGradient>
      </defs>
      <rect width="1655" height="795" fill="url(#sky)" />
      <rect width="1655" height="795" fill="url(#sides)" mask="url(#falloff)" />

      <path d="M386 244L1050 627V678L386 295z" fill="#959592" />
      <path d="M340 180A156 90 0 0 0 386 244V295A156 90 0 0 1 340 231z" fill="url(#leftEnd)" />
      <path d="M1050 627A156 90 0 0 0 1316 563V614A156 90 0 0 1 1050 678z" fill="url(#rightEnd)" />
      <path d="M340 231A156 90 0 0 0 386 295L1050 678A156 90 0 0 0 1316 614M386 244V295M1050 627V678" fill="none" stroke="#3c3c3c" />
      <path d="M340 180V231M1316 563V614" stroke="#83837f" />
      <path d="M606 116A156 90 0 1 0 386 244L1050 627A156 90 0 0 0 1270 499z" fill="#d6d6d4" stroke="#3c3c3c" />
      <Bore cx={496} cy={180} through="#949db1" />
      <Bore cx={1160} cy={563} through="#9aa1b2" />

      <path d="M765 599v20l4-4 4 9 3-1-4-9h6z" fill="#000" stroke="#fff" strokeWidth="0.8" />
    </svg>
  );
}

function Viewport() {
  return (
    <div className="relative min-h-0 flex-1 overflow-hidden">
      <Scene />
      <div className="absolute top-[5px] right-0 flex items-center gap-1.5">
        <button aria-label="最小化文件"><Glyph className="h-3.5 w-3.5"><path d="M2 10h16v5H2z" fill="#f2f2f2" stroke="#555" /></Glyph></button>
        <button aria-label="還原文件"><Glyph className="h-3.5 w-3.5"><path d="M7 2h11v12h-3M3 6h10v12H3z" fill="none" stroke="#f2f2f2" strokeWidth="2.6" /></Glyph></button>
        <button aria-label="關閉文件"><Glyph className="h-3.5 w-3.5"><path d="M4 3l12 14M16 3L4 17" stroke="#f2f2f2" strokeWidth="4" /></Glyph></button>
      </div>

      <svg viewBox="0 0 72 80" className="absolute top-[49px] right-[25px] h-20 w-[72px]" aria-label="ViewCube">
        <g stroke="#6e727a">
          <path d="M36 1L71 17 36 37 1 17z" fill="#888d98" />
          <path d="M1 17l35 20v41L5 56z" fill="#80858f" />
          <path d="M71 17L36 37v41l31-22z" fill="#7a7f89" />
        </g>
        <path d="M36 30l7 4v6l-7 4-7-4v-6z" fill="#6d7a8a" />
        <g fill="#555a64" fontSize="20" fontWeight="300" fontFamily="'Noto Sans CJK TC', sans-serif" textAnchor="middle">
          <text transform="translate(32 24) rotate(30)">前</text>
          <text transform="translate(16 58) rotate(30)">上</text>
          <text transform="translate(57 56) rotate(-60)">右</text>
        </g>
      </svg>

      <nav aria-label="導覽列" className="absolute top-[145px] right-0 flex h-[197px] w-[35px] flex-col items-center rounded border-2 border-[#4c535f] bg-[#7b808b] text-[#4c525c]">
        <button aria-label="關閉導覽列" className="mt-0.5 mr-0.5 flex self-end"><Glyph className="h-2 w-2"><circle cx="10" cy="10" r="10" fill="#4c525c" /><path d="M6 6l8 8M14 6l-8 8" stroke="#ccc" strokeWidth="2" /></Glyph></button>
        <button aria-label="導覽輪" className="mt-2.5 flex">
          <Glyph className="h-[22px] w-[22px]"><path d="M10 1h9v9a9 9 0 1 1-9-9z" fill="#b4b8bf" stroke="#dfe1e4" /><circle cx="10" cy="10" r="5" fill="#b4b8bf" stroke="#5d636d" /><path d="M6 14l-2 2M14 14l2 2" stroke="#5d636d" /></Glyph>
        </button>
        <Caret className="mt-2.5 w-1.5" />
        <span className="mt-1 h-px w-[26px] shrink-0 bg-[#4c525c]" />
        <button aria-label="平移" className="mt-1.5 flex"><FaHandPaper className="h-3.5 w-3.5 text-[#d2d4d8]" /></button>
        <button aria-label="縮放" className="mt-2.5 flex">
          <Glyph className="h-4 w-4"><path d="M12 12l6 6" stroke="#c0c3c8" strokeWidth="4" /><circle cx="8" cy="8" r="6" fill="#9095a0" stroke="#d2d4d8" strokeWidth="2" /><path d="M6 4h3l2 2v5H6z" fill="#e4e5e8" /></Glyph>
        </button>
        <Caret className="mt-1.5 w-1.5" />
        <button aria-label="環轉" className="mt-1.5 flex">
          <Glyph className="h-4 w-4"><g fill="none" stroke="#4f555f" strokeWidth="1.4"><ellipse cx="10" cy="10" rx="4" ry="9" /><ellipse cx="10" cy="11" rx="9" ry="4" /><path d="M10 8v6M7 11h6" /></g></Glyph>
        </button>
        <Caret className="mt-1.5 w-1.5" />
        <button aria-label="視向" className="mt-2 flex">
          <Glyph className="h-4 w-4"><path d="M2 6l9-4 2 3M1 7h18v12H1z" fill="#a3a7af" stroke="#cfd1d5" strokeWidth="1.3" /><path d="M5 11h10v5H5z" fill="#858a94" stroke="#4f555f" strokeWidth="1.4" /></Glyph>
        </button>
        <button aria-label="自訂導覽列" className="mt-auto mr-0.5 mb-0.5 flex self-end"><Glyph className="h-2 w-2"><circle cx="10" cy="10" r="10" fill="#4c525c" /><path d="M5 6h10M5 10h10l-5 5z" stroke="#ccc" strokeWidth="2" fill="#ccc" /></Glyph></button>
      </nav>

      <svg viewBox="0 0 60 64" className="absolute bottom-6 left-9 h-16 w-[60px]" aria-hidden="true">
        <path d="M16 36V14" stroke="#1414a0" />
        <path d="M16 36l9-6" stroke="#12a012" />
        <path d="M16 36l9 7" stroke="#a01212" />
        <path d="M16 12l6 10c-2 2-9 2-12 0z" fill="#0a0a96" />
        <path d="M26 22l12 2-6 9-6-3z" fill="#0a8c0a" />
        <path d="M26 38l6 1 6 10H27z" fill="#960a0a" />
        <g fontSize="12" fontFamily="'Liberation Sans', sans-serif" textAnchor="middle">
          <text x="16" y="10" fill="#2a2af0">Z</text>
          <text x="42" y="25" fill="#28dc28">Y</text>
          <text x="42" y="55" fill="#f02828">X</text>
        </g>
      </svg>

      <button aria-label="共用" className="absolute right-0 bottom-[38px] flex h-[58px] w-[58px] items-center justify-center border border-[#c4c4c4] bg-[#fafafa]">
        <svg viewBox="0 0 36 40" className="h-10 w-9" aria-hidden="true">
          <path d="M18 0l18 10v20L18 40 0 30V10z" fill="#4a9be6" />
          <path d="M0 10L18 0l18 10-6 3-12-6-12 6z" fill="#86c2f4" />
          <path d="M0 10l6 3v14l12 7v6L0 30z" fill="#62b1f5" />
          <path d="M6 27l12-7 12 7-12 6z" fill="#9fcdf4" />
          <path d="M22 14l-11 6 11 7" fill="none" stroke="#fff" strokeWidth="2" />
          <g fill="#fff"><circle cx="22" cy="14" r="3" /><circle cx="11" cy="20" r="3" /><circle cx="22" cy="27" r="3" /></g>
        </svg>
      </button>
    </div>
  );
}

const docTabs = ["test組合.iam", "固定軸.ipt", "blue2.ipt", "white3.ipt", "red4.ipt", "yellow5.ipt", "pink6.ipt", "orange7.ipt", "gray8.ipt", "9.ipt"];

function DocumentTabs() {
  return (
    <div className="flex h-[30px] shrink-0 items-stretch bg-[#5e5e5e] text-[#d0d0d0]">
      <div className="flex items-center gap-2.5 border-r border-[#909090] pr-1 pl-[5px]">
        {[
          { label: "重疊", d: "M1 1h11v4M1 1v6h3M5 5h10v4M5 5v8h3M8 10h11v9H8zM8 12h11" },
          { label: "並排", d: "M1 1h7v7H1zM12 1h7v7h-7zM1 12h7v7H1zM12 12h7v7h-7zM1 3h7M12 3h7M1 14h7M12 14h7" },
          { label: "水平", d: "M1 1h18v7H1zM1 12h18v7H1zM1 3h18M1 14h18" },
          { label: "垂直", d: "M1 1h7v18H1zM12 1h7v18h-7zM1 3h7M12 3h7" },
        ].map((item) => (
          <button key={item.label} aria-label={item.label}>
            <Glyph><path d={item.d} fill="none" stroke="#c4c4c4" strokeWidth="1.6" /></Glyph>
          </button>
        ))}
        <button aria-label="更多文件" className="pl-[3px]"><Glyph className="h-3 w-4"><path d="M10 1l11 18H-1z" fill="#dadada" /></Glyph></button>
      </div>
      {docTabs.map((name) =>
        name === "blue2.ipt" ? (
          <div key={name} className="flex items-center gap-2 bg-[#f6f6f6] px-3 text-[#4c4c4c]">
            {name}
            <button aria-label="關閉 blue2.ipt"><Glyph className="h-3 w-3"><path d="M3 2l14 16M17 2L3 18" stroke="#444" strokeWidth="4" /></Glyph></button>
          </div>
        ) : (
          <button key={name} className="px-3 whitespace-nowrap">{name}</button>
        )
      )}
    </div>
  );
}

function Running({ active, stacked }: { active?: boolean; stacked?: boolean }) {
  return (
    <span className={`absolute bottom-0 flex h-[3px] ${active ? "inset-x-0" : "inset-x-[5px]"}`}>
      <span className="flex-1 bg-[#76b9ed]" />
      {stacked && <span className="w-2.5 bg-[#5487ab]" />}
    </span>
  );
}

type TaskApp = { label: string; running?: boolean; stacked?: boolean; active?: boolean; art: ReactNode };

const taskApps: TaskApp[] = [
  {
    label: "行事曆",
    art: <g><path d="M2 3h26v26H2z" fill="#1c94e4" /><path d="M2 3h26v6H2z" fill="#0c63b4" /><path d="M6 1v5M24 1v5" stroke="#4fc3f7" strokeWidth="3" /><path d="M11 13h3M16 13h3M21 13h3M6 18h3M11 18h3M16 18h3M21 18h3M6 23h3M11 23h3M16 23h3" stroke="#fff" strokeWidth="3" /></g>,
  },
  {
    label: "Edge",
    art: <g><circle cx="15" cy="15" r="14" fill="#1273c9" /><path d="M1 14C2 6 8 1 15 1c8 0 14 5 14 12 0 4-3 7-7 7-3 0-4-2-3-4 1-4-3-7-7-7-5 0-9 2-11 5z" fill="#35c1b8" /><path d="M20 2c5 2 9 6 9 11 0 4-3 7-7 7-3 0-4-2-3-4 4-4 3-10 1-14z" fill="#5fd15a" /><path d="M10 13c-2 6 1 13 9 15 4 0 7-2 9-6-5 3-14 2-15-5 0-2 1-3 2-4z" fill="#0a4f9e" /></g>,
  },
  {
    label: "Chrome", running: true,
    art: <g><circle cx="14" cy="15" r="14" fill="#e34133" /><path d="M2 8l7 12 5 9A14 14 0 0 1 2 8z" fill="#2ba24c" /><path d="M28 13a14 14 0 0 1-14 16l6-12z" fill="#fcc31e" /><circle cx="14" cy="14" r="6" fill="#4a86ee" stroke="#fff" strokeWidth="1.6" /><circle cx="22" cy="20" r="8" fill="#d9bd4a" /><path d="M17 28c3-5 7-4 9 0-2 3-7 3-9 0zM19 16h2M24 17h3" fill="#3b2a17" stroke="#3b2a17" /></g>,
  },
  {
    label: "檔案總管", running: true, stacked: true,
    art: <g><path d="M1 3h11l3 3h14v20H1z" fill="#e8a317" /><path d="M1 8h28v18H1z" fill="#ffd866" /><path d="M6 26v-9h18v9h-5v-4h-8v4z" fill="#3793d8" /></g>,
  },
  {
    label: "LINE",
    art: <g><rect x="0" y="0" width="30" height="30" rx="4" fill="#00b900" /><path d="M15 4c7 0 12 4 12 9 0 6-8 10-12 13 0-2 0-3-1-3C8 23 3 19 3 13c0-5 5-9 12-9z" fill="#fff" /><text x="15" y="16" fontSize="7" fontWeight="bold" textAnchor="middle" fill="#00b900">LINE</text></g>,
  },
  {
    label: "Webex", running: true,
    art: <g><circle cx="15" cy="15" r="13" fill="#e9e9e9" /><g fill="none" strokeWidth="5"><path d="M5 18A10 10 0 0 1 9 7" stroke="#ff4f78" /><path d="M9 7a10 10 0 0 1 8-2" stroke="#c840dd" /><path d="M17 5a10 10 0 0 1 8 9" stroke="#ffa21a" /><path d="M25 14a10 10 0 0 1-8 11" stroke="#155d85" /><path d="M17 25A10 10 0 0 1 5 18" stroke="#18a9e8" /></g><circle cx="15" cy="16" r="8" fill="#7cc35a" /><circle cx="14" cy="13" r="8" fill="#fff" /></g>,
  },
  {
    label: "Spotify", running: true,
    art: <g><circle cx="15" cy="15" r="14" fill="#1ed760" /><path d="M6 11c6-2 13-1 18 2M7 16c5-1 11-1 16 2M8 20c5-1 9 0 13 2" fill="none" stroke="#111" strokeWidth="2.4" strokeLinecap="round" /></g>,
  },
  {
    label: "Inventor", running: true, active: true,
    art: <g><path d="M0 0h30v30H0z" fill="#fbe0c4" stroke="#fff" strokeWidth="1.5" /><path d="M1 18c10-3 20 2 28-6v17H1z" fill="#fdeedd" /><path d="M9 4h12v4l-3 1v12l3 1v4H9v-4l3-1V9L9 8z" fill="#c97f2c" stroke="#a8641b" /></g>,
  },
  {
    label: "記事本", running: true,
    art: <g><path d="M9 3l18 1-2 23-6 2z" fill="#b9892e" /><path d="M10 3l17 1-5 24-19-4z" fill="#8fc9d9" stroke="#dff1f5" /><path d="M5 18l19-3-3 12-17-4z" fill="#4f9fb4" /><path d="M10 3l17 1" stroke="#777" strokeWidth="2" strokeDasharray="2 1" /></g>,
  },
  {
    label: "命令提示字元", running: true, stacked: true,
    art: <g><path d="M1 3h28v23H1z" fill="#000" stroke="#9c9c9c" strokeWidth="1.4" /><path d="M1 3h28v4H1z" fill="#c7ccd2" /><path d="M5 10v3M8 10v3M11 10l2 3M14 13h5" stroke="#ddd" /></g>,
  },
  {
    label: "OpenSCAD", running: true, stacked: true,
    art: <g><circle cx="15" cy="15" r="14" fill="#3c3c3c" /><path d="M6 6c6-3 12 0 17 6M3 10c7-3 15 1 24 8M2 14c8-3 15 3 24 7M2 18c7-2 13 4 21 7M4 22c5-1 9 2 13 6M11 3c6-1 11 4 15 8M8 4c6-2 12 2 18 9M2 12c7-3 16 2 25 7M3 20c6-1 11 2 17 7" fill="none" stroke="#b5b5b5" /></g>,
  },
  {
    label: "相片環", running: true,
    art: <g fill="none" strokeWidth="8"><path d="M5 14A10 10 0 0 1 17 5" stroke="#2b7de9" /><path d="M16 5a10 10 0 0 1 8 14" stroke="#1ba34a" /><path d="M25 16a10 10 0 0 1-14 8" stroke="#fbc02d" /><path d="M13 25A10 10 0 0 1 5 12" stroke="#ee2b24" /></g>,
  },
  {
    label: "舞者", running: true,
    art: <g><circle cx="15" cy="15" r="14" fill="#fff" stroke="#c8202a" strokeWidth="1.4" /><path d="M3 9l10 4 9-8 1 1-6 10v3l-1 9h-2l-1-9 1-5L4 11z" fill="#d3202a" /><circle cx="15" cy="9" r="2" fill="#d3202a" /></g>,
  },
  {
    label: "滑雪", running: true,
    art: <g><path d="M0 0h30v30H0z" fill="#fffbe0" /><path d="M0 0h8v8H0zM16 8h7v7h-7zM8 23h8v7H8z" fill="#bfe0f8" /><path d="M8 0h8v8H8zM0 15h8v8H0zM23 0h7v8h-7zM23 23h7v7h-7z" fill="#fbc5c8" /><path d="M4 14l8-4 6-1 4-3 3 2-2 5-7 3 1 4-6 2-3-4z" fill="#2b2318" /><path d="M9 20l10 2M19 8l5 1" stroke="#f5b916" strokeWidth="2" /></g>,
  },
  {
    label: "相片", running: true,
    art: <g><path d="M1 1h28v28H1z" fill="#2aa5ea" /><path d="M14 29L22 13l7 8v8z" fill="#7d8fe0" /><path d="M1 21l9-9 17 17H1z" fill="#164a90" /><circle cx="19" cy="7" r="3" fill="#fff" /></g>,
  },
];

function Taskbar() {
  return (
    <footer className="flex h-[50px] shrink-0 items-stretch bg-linear-to-r from-[#22333c] via-[#26333a] to-[#1a2a33] text-white">
      <button aria-label="開始" className="flex w-[60px] shrink-0 items-center justify-center">
        <Glyph className="h-5 w-5"><path d="M0 3l9-1v8H0zM10 2l10-1v9H10zM0 11h9v8l-9-1zM10 11h10v9l-10-1z" fill="#fff" /></Glyph>
      </button>
      <label className="flex w-[430px] shrink-0 items-center gap-[15px] border border-[#5c5c5c] bg-[#333] pl-3.5">
        <Search className="h-[21px] w-[21px] shrink-0 -scale-x-100" strokeWidth={1.5} />
        <input aria-label="搜尋" placeholder="在這裡輸入文字來搜尋" className="min-w-0 flex-1 bg-transparent pb-0.5 text-[21px] placeholder:text-[#dcdcdc]" />
      </label>
      <button aria-label="Cortana" className="flex w-[60px] shrink-0 items-center justify-center">
        <span className="h-[19px] w-[19px] rounded-full border-[3px] border-white" />
      </button>
      <button aria-label="工作檢視" className="flex w-[63px] shrink-0 items-center justify-center pr-1">
        <Glyph><path d="M1 0v4h12V0M1 7h12v7H1zM1 20v-3h12v3M17 0v5M17 10v10M16 7h3" fill="none" stroke="#fff" strokeWidth="1.5" /></Glyph>
      </button>
      <div className="flex w-[810px] shrink-0">
        {taskApps.map((app) => (
          <button key={app.label} aria-label={app.label} className={`relative flex flex-1 items-center justify-center ${app.active ? "bg-[#4c585e]" : ""}`}>
            <svg viewBox="0 0 30 30" className="h-[30px] w-[30px]" aria-hidden="true">{app.art}</svg>
            {app.running && <Running active={app.active} stacked={app.stacked} />}
          </button>
        ))}
      </div>
      <div className="flex min-w-0 flex-1 items-center justify-end">
        <button className="mr-4 flex items-center gap-3 text-lg whitespace-nowrap">
          <svg viewBox="0 0 28 24" className="h-6 w-7" aria-hidden="true">
            <circle cx="9" cy="8" r="7" fill="#f9b52b" />
            <path d="M5 19a5 5 0 0 1 1-9 7 7 0 0 1 12-1 6 6 0 0 1 5 10z" fill="#cfe4f8" />
            <path d="M9 16l2 3c0 2-4 2-4 0zM19 12l2 4c0 3-5 3-4 0z" fill="#2b86e0" />
          </svg>
          18°C
        </button>
        <ToolButton label="隱藏的圖示" className="w-6"><ChevronUp className="h-6 w-6" strokeWidth={1.5} /></ToolButton>
        <ToolButton label="會議" className="w-9">
          <Glyph className="h-[18px] w-[18px]"><path d="M4 6h9v9H4zM13 9l4-3v9l-4-3M4 3c3-3 9-3 12 0M4 18c3 3 9 3 12 0" fill="none" stroke="#fff" strokeWidth="1.4" /></Glyph>
        </ToolButton>
        <ToolButton label="電源" className="w-7">
          <Glyph><path d="M5 6h13v9H5z" fill="#fff" /><path d="M19 8v5M2 3v3M5 2v3M1 6h5v3H1zM3 9v5" stroke="#fff" strokeWidth="1.5" fill="none" /></Glyph>
        </ToolButton>
        <ToolButton label="網路" className="w-[30px]">
          <Glyph className="h-4 w-4"><g fill="none" strokeWidth="1.5"><path d="M1 19A18 18 0 0 1 19 1M6 19A13 13 0 0 1 19 6" stroke="#b3babe" /><path d="M11 19a8 8 0 0 1 8-8" stroke="#fff" /></g><circle cx="17" cy="17" r="2" fill="#fff" /></Glyph>
        </ToolButton>
        <ToolButton label="音量" className="w-8">
          <Glyph><path d="M1 7h3l5-4v14l-5-4H1z" fill="none" stroke="#fff" strokeWidth="1.3" /><path d="M12 7c1 2 1 4 0 6" fill="none" stroke="#fff" strokeWidth="1.3" /><path d="M15 5c2 3 2 7 0 10M18 3c3 4 3 10 0 14" fill="none" stroke="#8c959b" strokeWidth="1.2" /></Glyph>
        </ToolButton>
        <ToolButton label="觸控鍵盤" className="w-[38px]">
          <svg viewBox="0 0 30 18" className="h-[18px] w-[30px]" aria-hidden="true">
            <path d="M1 1h28v16H1z" fill="none" stroke="#fff" strokeWidth="1.3" />
            <path d="M4 5h22M4 9h22" stroke="#fff" strokeWidth="1.5" strokeDasharray="1.5 2" /><path d="M4 13h3M10 13h10M23 13h3" stroke="#fff" strokeWidth="1.5" />
          </svg>
        </ToolButton>
        <button className="w-[30px] text-lg">英</button>
        <button className="w-[88px] text-center leading-[23px] whitespace-nowrap">
          <span className="block">上午 10:47</span>
          <span className="block">2022/1/6</span>
        </button>
        <button aria-label="通知" className="relative mr-[15px] ml-[18px] h-[30px] w-[30px]">
          <Glyph className="h-5 w-5"><path d="M0 1h20v14H9l-5 5v-5H0z" fill="#fff" /><path d="M4 5h12M4 8h12M4 11h8" stroke="#333" strokeWidth="1.4" /></Glyph>
          <span className="absolute right-0 bottom-0 flex h-5 w-5 items-center justify-center rounded-full border border-[#8c8c8c] bg-[#333]">3</span>
        </button>
        <span className="mr-[5px] w-px self-stretch bg-[#7d868b]" />
      </div>
    </footer>
  );
}

export default function App() {
  return (
    <div className="flex h-screen flex-col overflow-hidden bg-[#f5f5f5] font-['Noto_Sans','Noto_Sans_CJK_TC',sans-serif] text-[15px] leading-5">
      <TitleBar />
      <RibbonTabs />
      <Ribbon />
      <main className="flex min-h-0 flex-1">
        <ModelBrowser />
        <div className="flex min-w-0 flex-1 flex-col">
          <Viewport />
          <DocumentTabs />
        </div>
      </main>
      <div className="flex h-[29px] shrink-0 items-stretch bg-[#f6f6f6] text-black">
        <p className="flex flex-1 items-center">就緒</p>
        <p className="mt-0.5 flex w-10 items-center border-l border-[#cfcfcf] pl-2.5">1</p>
        <p className="mt-0.5 flex w-[38px] items-center border-l border-[#cfcfcf] pl-2">10</p>
      </div>
      <Taskbar />
    </div>
  );
}
